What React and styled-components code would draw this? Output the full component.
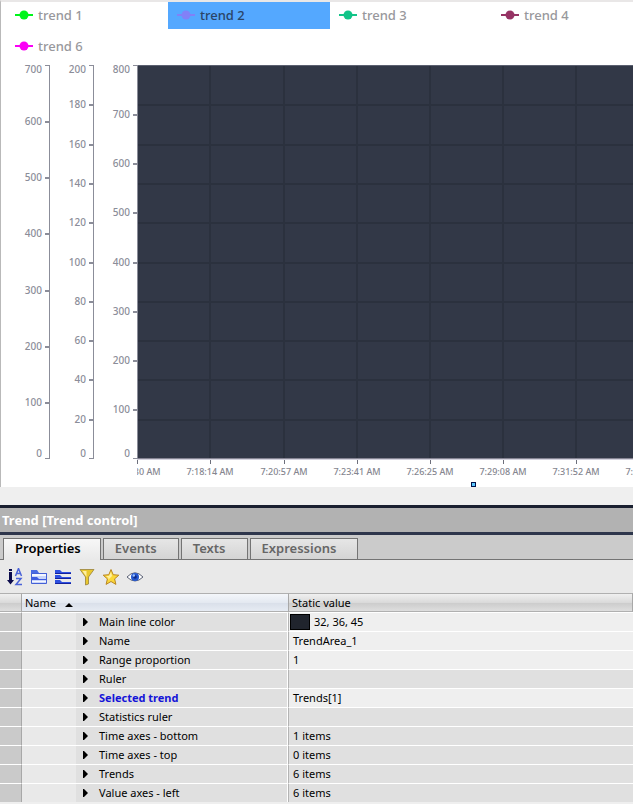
import React from 'react'
import styled, { createGlobalStyle, css } from 'styled-components'

const PLOT_TOP = 5
const PLOT_HEIGHT = 394
const PLOT_LEFT = 137

const legend = [
  { name: 'trend 1', color: '#00f51a' },
  { name: 'trend 2', color: '#8181f7', selected: true },
  { name: 'trend 3', color: '#12c488' },
  { name: 'trend 4', color: '#963364' },
  { name: 'trend 6', color: '#fb00f6', wrap: true },
]

const valueAxes = [
  { x: 49, max: 700, step: 100 },
  { x: 93, max: 200, step: 20 },
  { x: 137, max: 800, step: 100 },
]

const times = [
  { x: 137, label: '7:15:30 AM' },
  { x: 210, label: '7:18:14 AM' },
  { x: 284, label: '7:20:57 AM' },
  { x: 357, label: '7:23:41 AM' },
  { x: 430, label: '7:26:25 AM' },
  { x: 503, label: '7:29:08 AM' },
  { x: 576, label: '7:31:52 AM' },
  { x: 649, label: '7:34:36 AM' },
]

const tabs = ['Properties', 'Events', 'Texts', 'Expressions']

const rows = [
  { name: 'Main line color', value: '32, 36, 45', swatch: '#20242d', editable: true },
  { name: 'Name', value: 'TrendArea_1', editable: true },
  { name: 'Range proportion', value: '1', editable: true },
  { name: 'Ruler', value: '' },
  { name: 'Selected trend', value: 'Trends[1]', editable: true, active: true },
  { name: 'Statistics ruler', value: '' },
  { name: 'Time axes - bottom', value: '1 items' },
  { name: 'Time axes - top', value: '0 items' },
  { name: 'Trends', value: '6 items' },
  { name: 'Value axes - left', value: '6 items' },
]

function Axis({ x, max, step }) {
  const ticks = []
  for (let v = max; v >= 0; v -= step) {
    const y = Math.round(PLOT_TOP + (PLOT_HEIGHT - 1) * (1 - v / max))
    // end labels are pulled inside the axis
    const shift = v === max ? 8 : v === 0 ? -1 : 4
    ticks.push(
      <g key={v}>
        <rect x={x - 4} y={y} width="4" height={v === max || v === 0 ? 1 : 2} />
        <AxisText x={x - 7} y={y + shift} textAnchor="end">{v}</AxisText>
      </g>
    )
  }
  return (
    <g fill="#8b8d99">
      <rect x={x} y={PLOT_TOP} width="1" height={PLOT_HEIGHT} />
      {ticks}
    </g>
  )
}

function Chart() {
  const lines = []
  for (let i = 1; i < 10; i++) {
    lines.push(Math.round(PLOT_TOP + (PLOT_HEIGHT - 1) * i / 10))
  }
  return (
    <ChartSvg role="img" aria-label="Trend chart">
      <defs>
        <clipPath id="time-clip">
          <rect x={PLOT_LEFT} y={PLOT_TOP} width="100%" height="430" />
        </clipPath>
      </defs>
      <rect x={PLOT_LEFT} y={PLOT_TOP} width="100%" height={PLOT_HEIGHT} fill="#323847" />
      <g fill="#2b313e">
        {lines.map(y => <rect key={y} x={PLOT_LEFT} y={y} width="100%" height="2" />)}
        {times.slice(1).map(t => <rect key={t.x} x={t.x - 1} y={PLOT_TOP} width="2" height={PLOT_HEIGHT} />)}
      </g>
      <rect x={PLOT_LEFT} y={PLOT_TOP} width="100%" height="1" fill="#5b6070" />
      <rect x={PLOT_LEFT} y="398" width="100%" height="1" fill="#858493" />
      <rect x={PLOT_LEFT} y="399" width="100%" height="1" fill="#d4d2de" />
      {valueAxes.map(a => <Axis key={a.x} {...a} />)}
      <g clipPath="url(#time-clip)" fill="#85868f">
        {times.map(t => (
          <g key={t.x}>
            <rect x={t.x} y="400" width="1" height="4" fill="#6d6f7b" />
            <TimeText x={t.x} y="415" textAnchor="middle">{t.label}</TimeText>
          </g>
        ))}
      </g>
    </ChartSvg>
  )
}

function SortIcon() {
  return (
    <Icon viewBox="0 0 18 18">
      <path d="M3 1h3v2H3zM3 4h3v8h2l-3.500 4.500L1 12h2z" fill="#0b0b4c" />
      <path d="M9.500 8l3-7.500 3 7.500M10.500 5.500h4M10 10.500h5l-5 6h6" fill="none" stroke="#4a62d8" strokeWidth="1.500" />
    </Icon>
  )
}

function CategoryIcon() {
  return (
    <Icon viewBox="0 0 18 18">
      <path d="M1 2h6l2 3h8v3H1z" fill="#4a6be2" />
      <path d="M1.500 5.500h15v10h-15z" fill="#c9d5fb" stroke="#4460d6" />
      <path d="M2 7h14" stroke="#f4f7ff" strokeWidth="2" />
      <path d="M2 9h5l2 2h7v1H2z" fill="#3f5ce0" />
      <path d="M2 13h14v1H2z" fill="#f4f7ff" />
    </Icon>
  )
}

function ListIcon() {
  return (
    <Icon viewBox="0 0 18 18">
      <path d="M1 2h5l2 2h9v2H1zM1 7h5l2 2h9v2H1zM1 12h5l2 2h9v2H1z" fill="#2e50e0" />
      <path d="M1 5h16v1H1zM1 10h16v1H1zM1 15h16v1H1z" fill="#13209c" />
    </Icon>
  )
}

function FilterIcon() {
  return (
    <Icon viewBox="0 0 18 18">
      <path d="M2 1.500h14l-5.500 7.500v7l-3 1V9z" fill="#e9c82e" stroke="#98813a" strokeWidth="0.800" />
      <path d="M4.500 3h4L8.500 15V9z" fill="#fff0a0" />
    </Icon>
  )
}

function StarIcon() {
  return (
    <Icon viewBox="0 0 18 18">
      <path d="M9 1.500l2.200 5.200 5.600.5-4.200 3.700 1.300 5.500L9 13.500l-4.900 2.900 1.300-5.500L1.200 7.200l5.600-.5z" fill="#fbd83a" stroke="#b98622" />
      <path d="M9 4l1 4-4 4 .5-2L4 8h3z" fill="#fff0a0" />
    </Icon>
  )
}

function EyeIcon() {
  return (
    <Icon viewBox="0 0 18 18">
      <path d="M1 9q8-8.500 16 0-8 8-16 0z" fill="#fff" stroke="#5a6175" />
      <circle cx="9" cy="9" r="4" fill="#2457cf" />
      <circle cx="9" cy="9" r="1.800" fill="#102a86" />
      <circle cx="7.800" cy="7.500" r="1.200" fill="#9cc4ff" />
    </Icon>
  )
}

const tools = [
  { label: 'Sort alphabetically', Glyph: SortIcon },
  { label: 'Categories', Glyph: CategoryIcon },
  { label: 'List', Glyph: ListIcon },
  { label: 'Filter', Glyph: FilterIcon },
  { label: 'Favorites', Glyph: StarIcon },
  { label: 'Show', Glyph: EyeIcon },
]

function App() {
  return (
    <Page>
      <GlobalStyle />
      <TrendControl>
        <Legend>
          {legend.map(item => (
            <LegendItem key={item.name} $selected={item.selected} $wrap={item.wrap}>
              <Marker viewBox="0 0 18 10">
                <path d="M0 5h18" stroke={item.color} strokeWidth="2" />
                <circle cx="9" cy="5" r="4.500" fill={item.color} />
              </Marker>
              {item.name}
            </LegendItem>
          ))}
        </Legend>
        <Chart />
        <ResizeHandle />
      </TrendControl>
      <Inspector>
        <Title>Trend [Trend control]</Title>
        <TabBar role="tablist">
          {tabs.map((tab, i) => (
            <Tab key={tab} role="tab" aria-selected={i === 0} $active={i === 0}>{tab}</Tab>
          ))}
        </TabBar>
        <Toolbar>
          {tools.map(({ label, Glyph }) => (
            <ToolButton key={label} aria-label={label}><Glyph /></ToolButton>
          ))}
        </Toolbar>
        <Table>
          <colgroup>
            <GutterCol />
            <IndentCol />
            <NameCol />
            <col />
          </colgroup>
          <thead>
            <tr>
              <HeadCell />
              <HeadCell colSpan="2" $blue>Name <SortArrow viewBox="0 0 8 4"><path d="M0 4l4-4 4 4z" /></SortArrow></HeadCell>
              <HeadCell>Static value</HeadCell>
            </tr>
          </thead>
          <tbody>
            {rows.map(row => (
              <tr key={row.name}>
                <GutterCell />
                <IndentCell />
                <NameCell $active={row.active}>
                  <Expander aria-label={'Expand ' + row.name}>
                    <svg width="5" height="8" viewBox="0 0 5 8"><path d="M0 0h1l4 4-4 4H0z" /></svg>
                  </Expander>
                  {row.name}
                </NameCell>
                <ValueCell $editable={row.editable}>
                  {row.swatch && <Swatch $color={row.swatch} />}
                  {row.value}
                </ValueCell>
              </tr>
            ))}
          </tbody>
        </Table>
      </Inspector>
    </Page>
  )
}

export default App


const GlobalStyle = createGlobalStyle`
  * {
    box-sizing: border-box;
  }
  body {
    margin: 0;
    background: #efefef;
    font-family: "Noto Sans", "Open Sans", sans-serif;
  }
  button {
    font-family: inherit;
  }
`

const Page = styled.div`
  overflow: hidden;
`

const TrendControl = styled.section`
  position: relative;
  background: #fff;
  border-top: 2px solid #e9e7e7;
  border-left: 1px solid #b9b9b9;
`

const Legend = styled.div`
  display: grid;
  grid-template-columns: repeat(4, 162px);
  row-gap: 4px;
  padding-left: 5px;
  overflow: hidden;
`

const LegendItem = styled.div`
  display: flex;
  align-items: center;
  gap: 5px;
  height: 27px;
  padding: 0 0 2px 9px;
  font-size: 13px;
  font-weight: 500;
  color: #98989c;
  ${props => props.$wrap && css`
    grid-column-start: 1;
  `}
  ${props => props.$selected && css`
    background: #54a8ff;
    color: #2a4467;
  `}
`

const Marker = styled.svg`
  width: 18px;
  height: 10px;
`

const ChartSvg = styled.svg`
  display: block;
  width: calc(100% + 1px);
  height: 427px;
  margin-left: -1px;
`

const AxisText = styled.text`
  font-size: 10px;
  font-weight: 500;
`

const TimeText = styled.text`
  font-size: 9px;
  font-weight: 500;
`

const ResizeHandle = styled.span`
  position: absolute;
  left: calc(75% - 4px);
  bottom: 0;
  width: 5px;
  height: 5px;
  background: #5cc8ff;
  border: 1px solid #00124a;
`

const Inspector = styled.section`
  margin-top: 18px;
  background: #e9e9e9;
`

const Title = styled.h1`
  margin: 0;
  padding-left: 2px;
  border-top: 3px solid #1a2030;
  border-bottom: 3px solid #2e364c;
  background: #b2b2b2;
  color: #fff;
  font-size: 13px;
  font-weight: 700;
  line-height: 24px;
`

const TabBar = styled.div`
  display: flex;
  gap: 2px;
  height: 25px;
  padding: 3px 0 0 3px;
  background: #cbcbcb;
  border-bottom: 1px solid #747474;
`

const Tab = styled.button`
  height: 21px;
  padding: 0 21px 2px 11px;
  border: 1px solid #747474;
  border-bottom: 0;
  background: linear-gradient(#e6e6e6, #d4d4d4);
  color: #666;
  font-size: 13px;
  font-weight: 600;
  line-height: 18px;
  ${props => props.$active && css`
    height: 22px;
    padding: 0 19px 3px 11px;
    background: linear-gradient(#f7f7f7, #e9e9e9);
    color: #000;
  `}
`

const Toolbar = styled.div`
  display: flex;
  align-items: center;
  gap: 6px;
  height: 33px;
  padding-left: 6px;
`

const ToolButton = styled.button`
  width: 18px;
  height: 18px;
  padding: 0;
  border: 0;
  background: none;
`

const Icon = styled.svg`
  display: block;
  width: 18px;
  height: 18px;
`

const Table = styled.table`
  width: 100%;
  table-layout: fixed;
  border-collapse: separate;
  border-spacing: 0;
  font-size: 11px;
  line-height: 18px;
`

const GutterCol = styled.col`
  width: 22px;
`

const IndentCol = styled.col`
  width: 54px;
`

const NameCol = styled.col`
  width: 213px;
`

const HeadCell = styled.th`
  height: 19px;
  padding: 0 3px;
  border-top: 1px solid #b0b0b0;
  border-bottom: 1px solid #b0b0b0;
  border-right: 1px solid #a8a8a8;
  background: ${props => props.$blue
    ? 'linear-gradient(#f4f6fa, #e4e9f1 50%, #d9dfe9 51%, #e6ebf3)'
    : 'linear-gradient(#f0f0f0, #dadada 50%, #cbcbcb 51%, #dedede)'};
  font-weight: 400;
  line-height: 17px;
  text-align: left;
`

const SortArrow = styled.svg`
  width: 8px;
  height: 4px;
  margin-left: 6px;
`

// the first row starts one pixel under the header, so the lines sit on top of each row
const Cell = styled.td`
  height: 19px;
  padding: 0;
  border-top: 1px solid #fff;
  white-space: nowrap;
`

const GutterCell = styled(Cell)`
  background: #cacaca;
  border-right: 1px solid #a8a8a8;
`

const IndentCell = styled(Cell)`
  background: #e9e9e9;
`

const NameCell = styled(Cell)`
  background: #e0e0e0;
  border-right: 1px solid #b4b4b4;
  box-shadow: inset -1px 0 #fff;
  ${props => props.$active && css`
    color: #1414d8;
    font-weight: 700;
  `}
`

const Expander = styled.button`
  width: 23px;
  height: 18px;
  padding: 0 0 0 7px;
  border: 0;
  background: none;
  text-align: left;
  vertical-align: top;

  svg {
    display: block;
  }
`

const ValueCell = styled(Cell)`
  padding-left: 4px;
  background: ${props => props.$editable ? '#efefef' : '#e0e0e0'};
`

const Swatch = styled.span`
  display: inline-block;
  width: 20px;
  height: 16px;
  margin: 1px 4px 0 -3px;
  border: 1px solid #000;
  background: ${props => props.$color};
  vertical-align: top;
`
